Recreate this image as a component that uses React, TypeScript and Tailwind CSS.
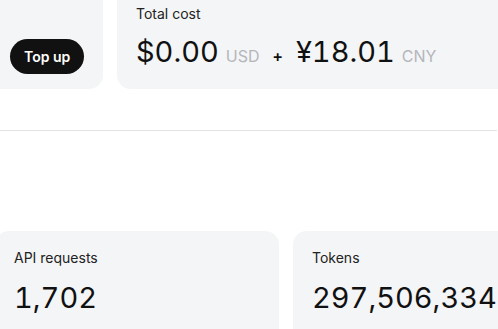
export default function App() {
  return (
    <div className="h-[329px] w-[498px] overflow-hidden bg-white font-['Inter',sans-serif] text-[#111]">
      {/* top: balance + total cost */}
      <div className="-mt-[13px] -ml-[100px] flex gap-[14px]">
        <div className="flex h-[102px] w-[203px] shrink-0 items-end rounded-[14px] bg-[#f4f5f7] pb-[15px] pl-[110px]">
          <button className="h-[35px] rounded-full bg-[#111] px-[14px] text-[14px] font-semibold text-white">
            Top up
          </button>
        </div>
        <div className="h-[102px] w-[500px] shrink-0 rounded-[14px] bg-[#f4f5f7] px-[19px] pt-[17px]">
          <div className="text-[14px] leading-[20px] text-[#222]">Total cost</div>
          <div className="mt-[8px] flex items-baseline tabular-nums">
            <span className="text-[29px] leading-[40px]">$0.00</span>
            <span className="ml-[7px] text-[16px] text-[#b4b6bb]">USD</span>
            <span className="mx-[13px] text-[16px] font-semibold">+</span>
            <span className="text-[29px] leading-[40px]">¥18.01</span>
            <span className="ml-[7px] text-[16px] text-[#b4b6bb]">CNY</span>
          </div>
        </div>
      </div>

      <div className="mt-[41px] h-px w-[497px] bg-[#e4e4e6]" />

      {/* usage stats */}
      <div className="mt-[100px] -ml-[5px] flex gap-[14px]">
        <div className="h-[120px] w-[284px] shrink-0 rounded-[14px] bg-[#f4f5f7] px-[19px] pt-[17px]">
          <div className="text-[14px] leading-[20px] text-[#222]">API requests</div>
          <div className="mt-[10px] text-[29px] leading-[40px] tabular-nums">1,702</div>
        </div>
        <div className="h-[120px] w-[284px] shrink-0 rounded-[14px] bg-[#f4f5f7] px-[19px] pt-[17px]">
          <div className="text-[14px] leading-[20px] text-[#222]">Tokens</div>
          <div className="mt-[10px] text-[29px] leading-[40px] tabular-nums">297,506,334</div>
        </div>
      </div>
    </div>
  );
}
